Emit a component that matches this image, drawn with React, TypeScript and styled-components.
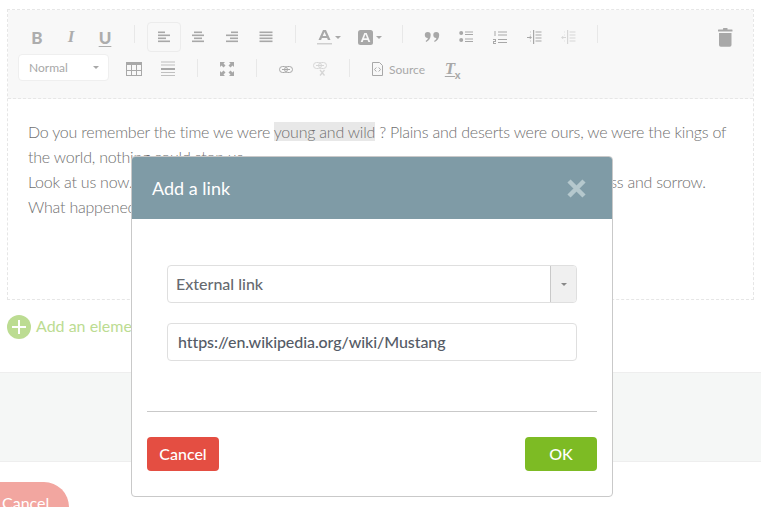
import React from 'react';
import styled, { createGlobalStyle } from 'styled-components';

const GlobalStyle = createGlobalStyle`
  html, body {
    margin: 0;
    padding: 0;
    background: #fff;
    font-family: Lato, "Open Sans", sans-serif;
  }
`;

const Page = styled.div`
  position: relative;
  width: 761px;
  height: 507px;
  overflow: hidden;
  padding-top: 9px;
  box-sizing: border-box;
`;

const Editor = styled.div`
  margin: 0 7px;
  height: 291px;
  border: 1px dashed #e6e6e6;
  box-sizing: border-box;
`;

const Toolbar = styled.div`
  background: #f8f8f8;
  height: 89px;
  padding: 12px 11px 0 12px;
  box-sizing: border-box;
  border-bottom: 1px dashed #e6e6e6;
`;

const ToolRow = styled.div`
  display: flex;
  align-items: center;
  height: 30px;
  margin-bottom: 2px;
`;

const ToolButton = styled.div<{ $active?: boolean; $width?: number; $faded?: boolean }>`
  display: flex;
  align-items: center;
  justify-content: center;
  flex: none;
  width: ${(p) => p.$width ?? 34}px;
  height: 30px;
  box-sizing: border-box;
  color: ${(p) => (p.$faded ? '#d6d6d6' : '#a8a8a8')};
  border-radius: 4px;
  border: 1px solid ${(p) => (p.$active ? '#ececec' : 'transparent')};
`;

const Glyph = styled.span<{ $italic?: boolean; $underline?: boolean }>`
  font-family: ${(p) => (p.$italic ? '"Liberation Serif", serif' : 'Lato, sans-serif')};
  font-size: 17px;
  font-weight: 900;
  font-style: ${(p) => (p.$italic ? 'italic' : 'normal')};
  text-decoration: ${(p) => (p.$underline ? 'underline' : 'none')};
  text-underline-offset: 2px;
  color: #adadad;
`;

const Separator = styled.div<{ $top: number }>`
  flex: none;
  align-self: flex-start;
  width: 1px;
  height: 18px;
  margin: ${(p) => p.$top}px 12px 0;
  background: #e8e8e8;
`;

const TrashButton = styled(ToolButton)`
  margin-left: auto;
`;

const StyleSelect = styled.div`
  flex: none;
  align-self: flex-start;
  display: flex;
  align-items: center;
  justify-content: space-between;
  width: 91px;
  height: 27px;
  margin: 0 8px 0 -2px;
  padding: 0 9px 0 10px;
  box-sizing: border-box;
  background: #fff;
  border: 1px solid #efefef;
  border-radius: 4px;
  font-size: 12px;
  color: #a8a8a8;
`;

const Caret = styled.span<{ $color?: string }>`
  flex: none;
  width: 0;
  height: 0;
  border-left: 3px solid transparent;
  border-right: 3px solid transparent;
  border-top: 3px solid ${(p) => p.$color ?? '#a8a8a8'};
`;

const ColorButton = styled(ToolButton)`
  gap: 3px;
`;

const SourceButton = styled(ToolButton)`
  gap: 6px;
  font-size: 12px;
  justify-content: center;
`;

const ClearGlyph = styled.span`
  position: relative;
  font-family: "Liberation Serif", serif;
  font-size: 17px;
  font-weight: 700;
  font-style: italic;
  text-decoration: underline;
  text-underline-offset: 2px;
  margin-right: 4px;
  color: #a8a8a8;

  small {
    position: absolute;
    left: 10px;
    bottom: -2px;
    font-family: Lato, sans-serif;
    font-size: 11px;
    font-style: normal;
    display: inline-block;
  }
`;

const Content = styled.div`
  padding: 20px 20px 0;
  font-size: 16px;
  font-weight: 300;
  line-height: 25px;
  letter-spacing: -0.22px;
  color: #6f6f6f;
`;

const Highlight = styled.span`
  background: #e8e8e8;
`;

const AddElement = styled.div`
  display: flex;
  align-items: center;
  gap: 5px;
  margin: 15px 0 0 7px;
  height: 24px;
  font-size: 16px;
  line-height: 22px;
  color: #bcdc92;
`;

const AddLabel = styled.span`
  margin-top: -3px;
`;

const PlusCircle = styled.span`
  display: flex;
  align-items: center;
  justify-content: center;
  width: 24px;
  height: 24px;
  border-radius: 50%;
  background: #bcdc92;
`;

const Band = styled.div`
  height: 90px;
  margin-top: 33px;
  box-sizing: border-box;
  background: #f5f7f6;
  border-top: 1px solid #eeeeee;
  border-bottom: 1px solid #eeeeee;
`;

const PageCancel = styled.div`
  width: 99px;
  height: 50px;
  margin: 20px 0 0 -30px;
  padding: 11px 0 0 32px;
  box-sizing: border-box;
  background: #f2a6a0;
  border-radius: 25px;
  font-size: 16px;
  color: #fff;
`;

const Modal = styled.div`
  position: absolute;
  left: 131px;
  top: 156px;
  width: 482px;
  height: 341px;
  box-sizing: border-box;
  background: #fff;
  border: 1px solid #c9c9c9;
  border-radius: 4px;
`;

const ModalHeader = styled.div`
  display: flex;
  align-items: center;
  justify-content: space-between;
  height: 62px;
  padding: 0 26px 0 20px;
  background: #7f9ba6;
  border-radius: 3px 3px 0 0;
  font-size: 18px;
  color: #fff;
`;

const ModalBody = styled.div`
  display: flex;
  flex-direction: column;
  gap: 20px;
  padding: 46px 35px 50px;
`;

const LinkSelect = styled.div`
  display: flex;
  align-items: stretch;
  justify-content: space-between;
  height: 38px;
  box-sizing: border-box;
  border: 1px solid #dfdfdf;
  border-radius: 4px;
  font-size: 16px;
  font-weight: 500;
  color: #666a70;
`;

const SelectLabel = styled.span`
  padding-left: 8px;
  line-height: 36px;
`;

const SelectArrow = styled.span`
  display: flex;
  align-items: center;
  justify-content: center;
  width: 26px;
  box-sizing: border-box;
  background: #f0f0f0;
  border-left: 1px solid #c9c9c9;
  border-radius: 0 3px 3px 0;
`;

const UrlInput = styled.input`
  display: block;
  height: 38px;
  padding: 0 10px 2px;
  box-sizing: border-box;
  border: 1px solid #dfdfdf;
  border-radius: 4px;
  outline: none;
  font-family: Lato, sans-serif;
  font-size: 16px;
  font-weight: 500;
  letter-spacing: -0.08px;
  color: #555b66;
`;

const ModalFooter = styled.div`
  display: flex;
  justify-content: space-between;
  margin: 0 15px;
  padding-top: 25px;
  border-top: 1px solid #c9c9c9;
`;

const ModalButton = styled.div<{ $color: string }>`
  width: 72px;
  height: 34px;
  line-height: 34px;
  text-align: center;
  border-radius: 4px;
  background: ${(p) => p.$color};
  font-size: 16px;
  font-weight: 500;
  color: #fff;
`;

type LineSpec = [number, number, number];

// petites lignes horizontales des icones de la barre
const Lines = ({ lines }: { lines: LineSpec[] }) => (
  <svg width="14" height="16" viewBox="0 0 14 16" fill="currentColor">
    {lines.map(([x, y, w], i) => (
      <rect key={i} x={x} y={y} width={w} height="1.6" />
    ))}
  </svg>
);

const alignLeft: LineSpec[] = [[1, 2.5, 7], [1, 5.5, 12], [1, 8.5, 8], [1, 11.5, 12]];
const alignCenter: LineSpec[] = [[3, 2.5, 8], [1, 5.5, 12], [3, 8.5, 8], [1, 11.5, 12]];
const alignRight: LineSpec[] = [[6, 2.5, 7], [1, 5.5, 12], [5, 8.5, 8], [1, 11.5, 12]];
const justify: LineSpec[] = [[0.5, 2.5, 13], [0.5, 5.5, 13], [0.5, 8.5, 13], [0.5, 11.5, 13]];

const TextColorIcon = () => (
  <svg width="15" height="16" viewBox="0 0 15 16">
    <path d="M1.5 11 6 1h3l4.5 10h-2.600l-.8-2H4.900l-.8 2zM5.700 7h3.600L7.500 2.900z" fill="currentColor" />
    <rect y="14" width="15" height="1.500" fill="#cfcfcf" />
  </svg>
);

const BgColorIcon = () => (
  <svg width="15" height="15" viewBox="0 0 15 15">
    <rect width="15" height="15" rx="2.500" fill="currentColor" />
    <path d="M2.700 12 6.300 3h2.400l3.600 9h-2l-.7-2H5.400l-.7 2zM6 8.300h3L7.500 4.300z" fill="#f8f8f8" />
  </svg>
);

const QuoteIcon = () => (
  <svg width="16" height="12" viewBox="0 0 16 12" fill="currentColor">
    <path d="M3.700 1a3 3 0 0 1 3 3c0 3.200-1.700 5.800-4.500 7l-.6-1c1.300-.8 2.100-1.800 2.300-3A3 3 0 0 1 3.700 1zM12.200 1a3 3 0 0 1 3 3c0 3.200-1.700 5.800-4.500 7l-.6-1c1.300-.8 2.100-1.800 2.300-3a3 3 0 0 1-.2-6z" />
  </svg>
);

const BulletIcon = () => (
  <svg width="14" height="14" viewBox="0 0 14 14" fill="currentColor">
    <circle cx="2.200" cy="3" r="2" />
    <circle cx="2.200" cy="10" r="2" />
    <rect x="6" y="1.500" width="8" height="1" />
    <rect x="6" y="4" width="8" height="1" />
    <rect x="6" y="8.500" width="8" height="1" />
    <rect x="6" y="11" width="8" height="1" />
  </svg>
);

const NumberedIcon = () => (
  <svg width="14" height="15" viewBox="0 0 14 15" fill="currentColor">
    <rect x="1.500" y="1" width="1" height="5" />
    <path d="M0 9h3v3H1v1h2v1H0v-3h2v-1H0z" />
    <rect x="5" y="1.500" width="9" height="1" />
    <rect x="5" y="4.500" width="9" height="1" />
    <rect x="5" y="9" width="9" height="1" />
    <rect x="5" y="12" width="9" height="1" />
  </svg>
);

const IndentIcon = ({ flip }: { flip?: boolean }) => (
  <svg width="15" height="14" viewBox="0 0 15 14" fill="currentColor">
    <rect x="6" y="0" width="1.200" height="14" />
    <rect x="8.500" y="1.500" width="6" height="1" />
    <rect x="8.500" y="4.500" width="6" height="1" />
    <rect x="8.500" y="7.500" width="6" height="1" />
    <rect x="8.500" y="10.500" width="6" height="1" />
    <rect x="3" y="1.500" width="1" height="1" opacity=".6" />
    <rect x="3" y="4.500" width="1" height="1" opacity=".6" />
    <rect x="3" y="10.500" width="1" height="1" opacity=".6" />
    {flip ? (
      <path d="M0 7.500 2.200 5.700v1.200h2.800v1.200H2.200v1.200z" />
    ) : (
      <path d="M5 7.500 2.800 5.700v1.200H0v1.200h2.800v1.200z" />
    )}
  </svg>
);

const TrashIcon = () => (
  <svg width="15" height="19" viewBox="0 0 15 19" fill="currentColor">
    <rect x="0" y="1.500" width="14.500" height="2" rx=".5" />
    <rect x="5" y="0" width="4.500" height="2" rx=".5" />
    <path d="M1 5h12.500v12a1.800 1.800 0 0 1-1.800 1.800H2.800A1.800 1.800 0 0 1 1 17z" />
  </svg>
);

const TableIcon = () => (
  <svg width="16" height="16" viewBox="0 0 16 16" fill="none" stroke="currentColor">
    <rect x="0.500" y="1.500" width="15" height="13" />
    <rect x="0" y="1" width="16" height="3" fill="currentColor" stroke="none" />
    <path d="M0.500 9.500h15M5.500 4v10.500M10.500 4v10.500" />
  </svg>
);

const HrIcon = () => (
  <svg width="14" height="16" viewBox="0 0 14 16" fill="currentColor">
    <rect y="0.500" width="14" height="1" opacity=".7" />
    <rect y="3.500" width="14" height="1" opacity=".7" />
    <rect y="7" width="14" height="2" />
    <rect y="11" width="14" height="1" opacity=".7" />
    <rect y="14" width="14" height="1" opacity=".7" />
  </svg>
);

const MaximizeIcon = () => (
  <svg width="14" height="14" viewBox="0 0 14 14" fill="currentColor">
    <path d="M0 0h5L3.500 1.500 5.500 3.500 3.500 5.500 1.500 3.500 0 5zM14 0v5L12.500 3.500 10.500 5.500 8.500 3.500 10.500 1.500 9 0zM0 14V9l1.500 1.500 2-2 2 2-2 2L5 14zM14 14H9l1.500-1.500-2-2 2-2 2 2L14 9z" />
  </svg>
);

const LinkIcon = () => (
  <svg width="14" height="7" viewBox="0 0 14 7" fill="none" stroke="currentColor">
    <rect x="0.500" y="0.500" width="8" height="6" rx="3" />
    <rect x="5.500" y="0.500" width="8" height="6" rx="3" />
    <path d="M3 3.500h8" />
  </svg>
);

const UnlinkIcon = () => (
  <svg width="14" height="14" viewBox="0 0 14 14" fill="none" stroke="currentColor">
    <rect x="0.500" y="0.500" width="8" height="6" rx="3" />
    <rect x="5.500" y="0.500" width="8" height="6" rx="3" />
    <path d="M3 3.500h8" />
    <path d="M7 8l4.500 5.500M11.500 8 7 13.500" strokeWidth="1.300" />
  </svg>
);

const SourceIcon = () => (
  <svg width="11" height="14" viewBox="0 0 11 14" fill="none" stroke="currentColor">
    <path d="M0.500 0.500h7l3 3v10h-10z" />
    <path d="M4.300 5.500 2.500 7.500l1.800 2M6.700 5.500l1.800 2-1.800 2" />
  </svg>
);

const CloseIcon = () => (
  <svg width="19" height="19" viewBox="0 0 19 19" fill="none" stroke="#b5c8cd" strokeWidth="4.500">
    <path d="M2 2l15 15M17 2 2 17" />
  </svg>
);

const PlusIcon = () => (
  <svg width="14" height="14" viewBox="0 0 14 14" fill="#fff">
    <rect x="6" y="0" width="2" height="14" />
    <rect x="0" y="6" width="14" height="2" />
  </svg>
);

const App: React.FC = () => {
  return (
    <Page>
      <GlobalStyle />
      <Editor>
        <Toolbar>
          <ToolRow>
            <ToolButton><Glyph>B</Glyph></ToolButton>
            <ToolButton><Glyph $italic>I</Glyph></ToolButton>
            <ToolButton><Glyph $underline>U</Glyph></ToolButton>
            <Separator $top={3} />
            <ToolButton $active><Lines lines={alignLeft} /></ToolButton>
            <ToolButton><Lines lines={alignCenter} /></ToolButton>
            <ToolButton><Lines lines={alignRight} /></ToolButton>
            <ToolButton><Lines lines={justify} /></ToolButton>
            <Separator $top={3} />
            <ColorButton $width={41}><TextColorIcon /><Caret /></ColorButton>
            <ColorButton $width={41}><BgColorIcon /><Caret /></ColorButton>
            <Separator $top={3} />
            <ToolButton><QuoteIcon /></ToolButton>
            <ToolButton><BulletIcon /></ToolButton>
            <ToolButton><NumberedIcon /></ToolButton>
            <ToolButton><IndentIcon /></ToolButton>
            <ToolButton $faded><IndentIcon flip /></ToolButton>
            <Separator $top={3} />
            <TrashButton><TrashIcon /></TrashButton>
          </ToolRow>
          <ToolRow>
            <StyleSelect>Normal<Caret /></StyleSelect>
            <ToolButton><TableIcon /></ToolButton>
            <ToolButton><HrIcon /></ToolButton>
            <Separator $top={5} />
            <ToolButton><MaximizeIcon /></ToolButton>
            <Separator $top={5} />
            <ToolButton><LinkIcon /></ToolButton>
            <ToolButton $faded><UnlinkIcon /></ToolButton>
            <Separator $top={5} />
            <SourceButton $width={73}><SourceIcon />Source</SourceButton>
            <ToolButton><ClearGlyph>T<small>x</small></ClearGlyph></ToolButton>
          </ToolRow>
        </Toolbar>
        <Content>
          Do you remember the time we were <Highlight>young and wild</Highlight> ? Plains and deserts were ours, we were the kings of the world, nothing could stop us.
          <br />
          Look at us now. Rusted and forgotten, our days of glory long gone, we only know sadness and sorrow.
          <br />
          What happened to us ?
        </Content>
      </Editor>
      <AddElement>
        <PlusCircle><PlusIcon /></PlusCircle>
        <AddLabel>Add an element</AddLabel>
      </AddElement>
      <Band />
      <PageCancel>Cancel</PageCancel>
      <Modal>
        <ModalHeader>
          Add a link
          <CloseIcon />
        </ModalHeader>
        <ModalBody>
          <LinkSelect>
            <SelectLabel>External link</SelectLabel>
            <SelectArrow><Caret $color="#888" /></SelectArrow>
          </LinkSelect>
          <UrlInput readOnly value="https://en.wikipedia.org/wiki/Mustang" />
        </ModalBody>
        <ModalFooter>
          <ModalButton $color="#e44e42">Cancel</ModalButton>
          <ModalButton $color="#7dbb24">OK</ModalButton>
        </ModalFooter>
      </Modal>
    </Page>
  );
};

export default App;
